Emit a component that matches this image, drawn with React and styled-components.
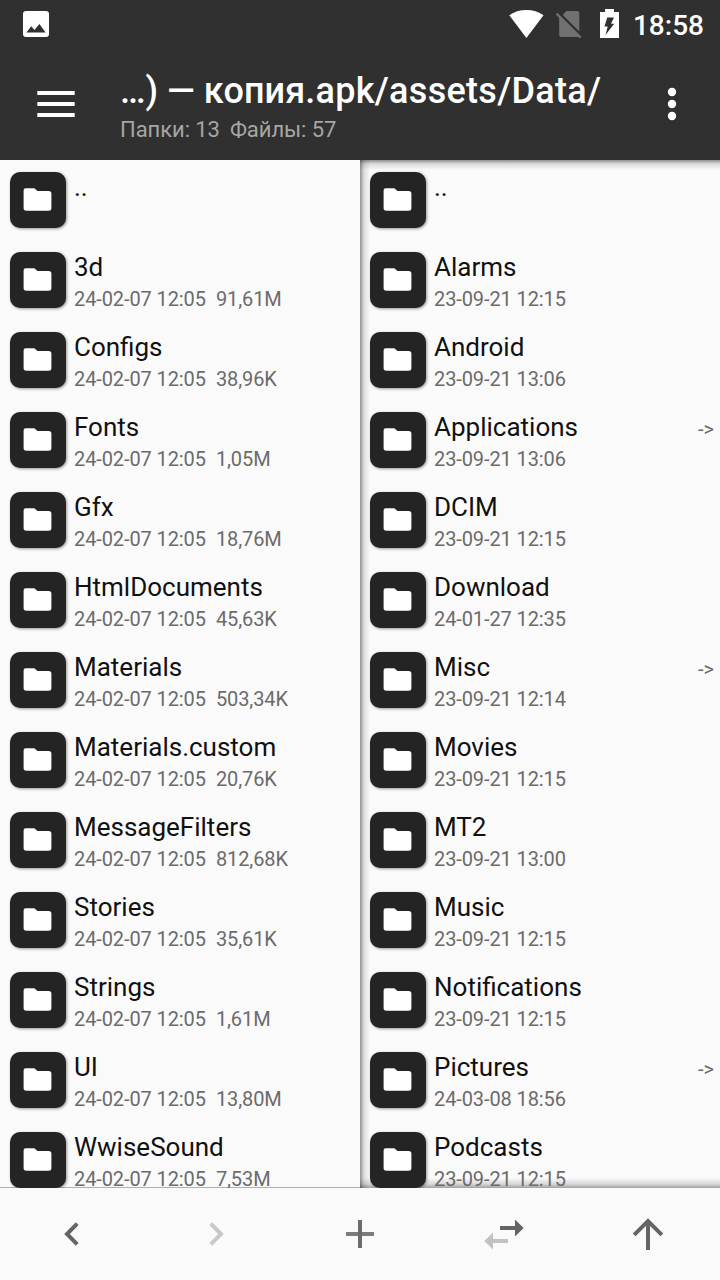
import React from "react";
import styled, { createGlobalStyle } from "styled-components";

const leftFiles = [
  { name: ".." },
  { name: "3d", date: "24-02-07 12:05", size: "91,61M" },
  { name: "Configs", date: "24-02-07 12:05", size: "38,96K" },
  { name: "Fonts", date: "24-02-07 12:05", size: "1,05M" },
  { name: "Gfx", date: "24-02-07 12:05", size: "18,76M" },
  { name: "HtmlDocuments", date: "24-02-07 12:05", size: "45,63K" },
  { name: "Materials", date: "24-02-07 12:05", size: "503,34K" },
  { name: "Materials.custom", date: "24-02-07 12:05", size: "20,76K" },
  { name: "MessageFilters", date: "24-02-07 12:05", size: "812,68K" },
  { name: "Stories", date: "24-02-07 12:05", size: "35,61K" },
  { name: "Strings", date: "24-02-07 12:05", size: "1,61M" },
  { name: "UI", date: "24-02-07 12:05", size: "13,80M" },
  { name: "WwiseSound", date: "24-02-07 12:05", size: "7,53M" },
];

const rightFiles = [
  { name: ".." },
  { name: "Alarms", date: "23-09-21 12:15" },
  { name: "Android", date: "23-09-21 13:06" },
  { name: "Applications", date: "23-09-21 13:06", link: true },
  { name: "DCIM", date: "23-09-21 12:15" },
  { name: "Download", date: "24-01-27 12:35" },
  { name: "Misc", date: "23-09-21 12:14", link: true },
  { name: "Movies", date: "23-09-21 12:15" },
  { name: "MT2", date: "23-09-21 13:00" },
  { name: "Music", date: "23-09-21 12:15" },
  { name: "Notifications", date: "23-09-21 12:15" },
  { name: "Pictures", date: "24-03-08 18:56", link: true },
  { name: "Podcasts", date: "23-09-21 12:15" },
];

function FileRow({ file }) {
  return (
    <Row>
      <Tile>
        <svg width="56" height="56" viewBox="0 0 56 56">
          <path
            d="M15.7 16.2h8.6l3.2 2.9h11.3a2.6 2.6 0 0 1 2.6 2.6v14.400a2.6 2.6 0 0 1-2.6 2.6H16.2a2.6 2.6 0 0 1-2.6-2.6V18.3a2.1 2.1 0 0 1 2.1-2.1z"
            fill="#fff"
          />
        </svg>
      </Tile>
      <Info>
        <Name>{file.name}</Name>
        {file.date && (
          <Meta>
            <span>{file.date}</span>
            {file.size && <span>{file.size}</span>}
          </Meta>
        )}
      </Info>
      {file.link && <LinkMark>-&gt;</LinkMark>}
    </Row>
  );
}

function App() {
  return (
    <Screen>
      <GlobalStyle />
      <StatusBar>
        <svg width="26" height="26" viewBox="0 0 26 26">
          <rect width="26" height="26" rx="3" fill="#fff" />
          <path d="M3.4 21.4 8.2 15.2l3.3 3.7 4.9-5.9 6.2 8.4z" fill="#303030" />
        </svg>
        <StatusIcons>
          <svg width="35" height="30" viewBox="0 0 35 30">
            <path d="M.3 6.3C5 2.7 11 1 17.4 1S29.7 2.7 34.5 6.3L17.4 29z" fill="#fff" />
          </svg>
          <svg width="27" height="30" viewBox="0 0 27 30">
            <path d="M10.4 2h10.900a2 2 0 0 1 2 2v18.400L7.300 6.400V5.200zM3.200 7.700 23.500 28H5.200a2 2 0 0 1-2-2z" fill="#717171" />
            <path d="M.6 4.700 24.600 28.700" stroke="#717171" strokeWidth="2.400" />
          </svg>
          <svg width="19" height="30" viewBox="0 0 19 30">
            <path d="M5 0h9v3h5v26H0V3h5z" fill="#fff" />
            <path d="M7.2 8.5H14l-3 6.200h3.200L5.500 26l2.200-8.600H4.500z" fill="#303030" />
          </svg>
        </StatusIcons>
        <Clock>18:58</Clock>
      </StatusBar>

      <Toolbar>
        <svg width="38" height="26" viewBox="0 0 38 26">
          <path d="M.3 0h37.400v4H.3zM.3 11h37.400v4H.3zM.3 22h37.400v4H.3z" fill="#fff" />
        </svg>
        <Heading>
          <Title>
            …) — копия<Path>.apk/assets/Data/</Path>
          </Title>
          <Subtitle>
            <span>Папки: 13</span>
            <span>Файлы: 57</span>
          </Subtitle>
        </Heading>
        <svg width="10" height="34" viewBox="0 0 10 34">
          <g fill="#fff">
            <circle cx="5" cy="5" r="4.2" />
            <circle cx="5" cy="17" r="4.2" />
            <circle cx="5" cy="29" r="4.2" />
          </g>
        </svg>
      </Toolbar>

      <Panes>
        <LeftPane>
          {leftFiles.map((file) => (
            <FileRow key={file.name} file={file} />
          ))}
        </LeftPane>
        <RightPane>
          {rightFiles.map((file) => (
            <FileRow key={file.name} file={file} />
          ))}
        </RightPane>
      </Panes>

      <BottomBar>
        <NavButton aria-label="back">
          <svg width="48" height="48" viewBox="0 0 48 48">
            <path d="M29.200 13.700 19 24l10.200 10.300" fill="none" stroke="#646464" strokeWidth="4" />
          </svg>
        </NavButton>
        <NavButton aria-label="forward">
          <svg width="48" height="48" viewBox="0 0 48 48">
            <path d="M18.800 13.700 29 24 18.800 34.300" fill="none" stroke="#c8c8c8" strokeWidth="4" />
          </svg>
        </NavButton>
        <NavButton aria-label="add">
          <svg width="48" height="48" viewBox="0 0 48 48">
            <path d="M10 24h28" stroke="#7c7c7c" strokeWidth="4" />
            <path d="M24 10v28" stroke="#6c6c6c" strokeWidth="4" />
          </svg>
        </NavButton>
        <NavButton aria-label="swap">
          <svg width="48" height="48" viewBox="0 0 48 48">
            <path d="M20 16h15V9.500L43.700 18 35 26.500V20H20z" fill="#646464" />
            <path d="M28 29H13v-6.500L4.300 31l8.700 8.500V33h15z" fill="#c2c2c2" />
          </svg>
        </NavButton>
        <NavButton aria-label="up">
          <svg width="48" height="48" viewBox="0 0 48 48">
            <path d="M24 40V11M10.200 24.800 24 11l13.800 13.800" fill="none" stroke="#646464" strokeWidth="4" />
          </svg>
        </NavButton>
      </BottomBar>
    </Screen>
  );
}

export default App;

const GlobalStyle = createGlobalStyle`
  * {
    box-sizing: border-box;
  }
  body {
    margin: 0;
    background: #fafafa;
    font-family: Roboto, "Noto Sans", sans-serif;
  }
  svg {
    display: block;
    flex-shrink: 0;
  }
`;

const Screen = styled.div`
  display: flex;
  flex-direction: column;
  width: 720px;
  height: 1280px;
  overflow: hidden;
  background: #fafafa;
`;

const StatusBar = styled.div`
  display: flex;
  align-items: center;
  justify-content: space-between;
  height: 48px;
  padding: 0 16px 0 23px;
  background: #303030;
`;

const StatusIcons = styled.div`
  display: flex;
  gap: 13px;
  margin-left: auto;
  margin-right: 14px;

  svg:nth-child(2) {
    margin-left: -1px;
  }
  svg:last-child {
    margin-left: 4px;
  }
`;

const Clock = styled.span`
  color: #fff;
  font-size: 28px;
  font-weight: 500;
  line-height: 32px;
  padding-top: 4px;
`;

const Toolbar = styled.header`
  display: flex;
  align-items: center;
  height: 112px;
  padding: 0 43px 0 37px;
  background: #303030;
`;

const Heading = styled.div`
  flex: 1;
  align-self: flex-start;
  padding-top: 22px;
  margin-left: 45px;
  white-space: nowrap;
`;

const Title = styled.div`
  color: #fff;
  font-size: 36px;
  font-weight: 500;
  font-kerning: none;
  line-height: 42px;
`;

const Path = styled.span`
  letter-spacing: 0.3px;
`;

const Subtitle = styled.div`
  display: flex;
  gap: 10px;
  margin-top: 6px;
  color: #a6a6a6;
  font-size: 22px;
  letter-spacing: -0.06px;
  line-height: 24px;
`;

const Panes = styled.main`
  display: flex;
  height: 1028px;
`;

const Pane = styled.section`
  width: 360px;
  height: 1028px;
  overflow: hidden;
`;

const LeftPane = styled(Pane)`
  background: linear-gradient(#b0b0b0, #b0b0b0) bottom / 100% 1px no-repeat;
`;

const RightPane = styled(Pane)`
  background:
    linear-gradient(to right, rgba(0, 0, 0, 0.42), rgba(0, 0, 0, 0.12) 4px, transparent 10px),
    linear-gradient(to bottom, rgba(0, 0, 0, 0.42), rgba(0, 0, 0, 0.12) 4px, transparent 10px),
    linear-gradient(to top, rgba(0, 0, 0, 0.36), rgba(0, 0, 0, 0.14) 4px, transparent 10px);
`;

const Row = styled.div`
  display: flex;
  height: 80px;
  padding: 12px 6px 0 10px;
`;

const Tile = styled.div`
  width: 56px;
  height: 56px;
  border-radius: 10px;
  background: #242424;
  box-shadow: 1px 1px 3px rgba(0, 0, 0, 0.4);
`;

const Info = styled.div`
  flex: 1;
  margin-left: 8px;
  white-space: nowrap;
`;

const Name = styled.div`
  color: #111;
  font-size: 26px;
  line-height: 30px;
`;

const Meta = styled.div`
  display: flex;
  gap: 10px;
  margin-top: 5px;
  color: #6b6b6b;
  font-size: 20px;
  letter-spacing: -0.1px;
  line-height: 24px;
`;

const LinkMark = styled.span`
  margin-top: 5px;
  color: #6b6b6b;
  font-size: 20px;
  line-height: 24px;
`;

const BottomBar = styled.nav`
  display: flex;
  height: 92px;
  background: #fafafa;
`;

const NavButton = styled.button`
  display: flex;
  flex: 1;
  align-items: center;
  justify-content: center;
  padding: 0;
  border: none;
  background: transparent;
`;
